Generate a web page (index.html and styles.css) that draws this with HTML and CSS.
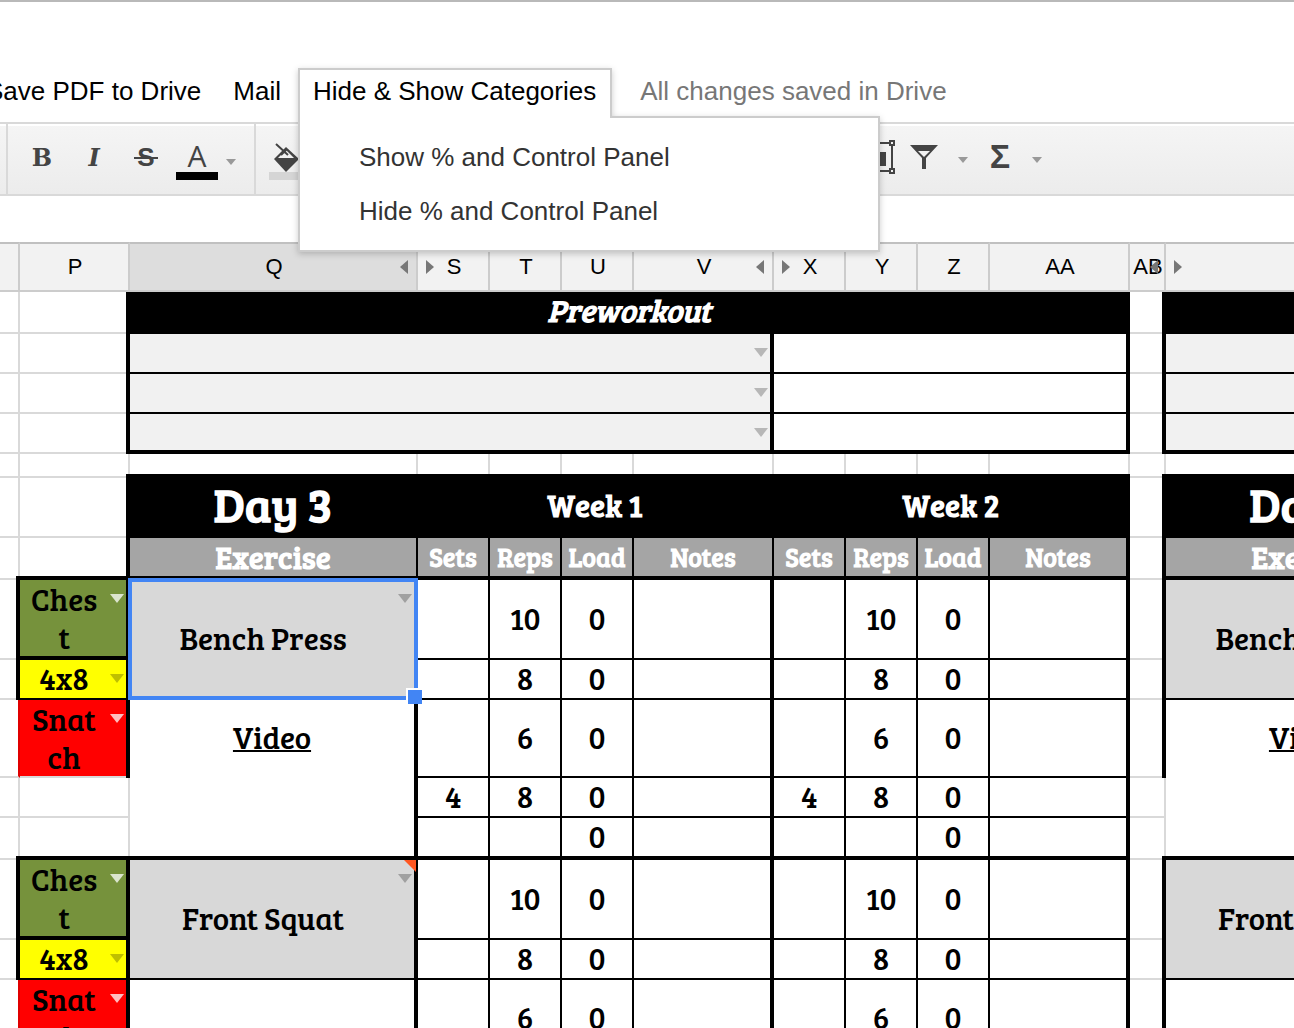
FILE: index.html
```html
<!DOCTYPE html>
<html lang="en">
<head>
    <meta charset="UTF-8">
    <meta name="viewport" content="width=device-width, initial-scale=1.0">
    <title>Training Program</title>
    <link rel="stylesheet" href="styles.css">
</head>
<body>
    <header>
        <nav class="menubar">
            <button class="menu-item">Save PDF to Drive</button>
            <button class="menu-item">Mail</button>
            <div class="menu-open">
                <button class="menu-tab">Hide &amp; Show Categories</button>
                <div class="menu-list">
                    <button>Show % and Control Panel</button>
                    <button>Hide % and Control Panel</button>
                </div>
            </div>
            <span class="status">All changes saved in Drive</span>
        </nav>
        <div class="toolbar">
            <div class="group">
                <button class="tool bold" title="Bold">B</button>
                <button class="tool italic" title="Italic">I</button>
                <button class="tool strike" title="Strikethrough">S</button>
                <button class="tool color" title="Text color">A</button>
                <button class="more" title="More colors"></button>
            </div>
            <div class="group fill">
                <button class="tool" title="Fill color">
                    <svg width="42" height="42" viewBox="0 0 42 42">
                        <rect x="0" y="34" width="42" height="8" fill="#d5d5d5"/>
                        <path d="M5 21 L17 9 L30 21 L17 34 Z" fill="#444"/>
                        <path d="M9 20 L17 12 L25 20 Z" fill="#f1f1f1"/>
                        <path d="M7 6 L19 17 M12 17 L18 11" stroke="#444" stroke-width="2" fill="none"/>
                    </svg>
                </button>
            </div>
            <div class="group data">
                <button class="tool" title="Insert chart">
                    <svg width="36" height="36" viewBox="0 0 36 36">
                        <path d="M4 4 H32 V32 H4 Z" fill="none" stroke="#444" stroke-width="2"/>
                        <path d="M10 18 h5 v9 h-5 Z M20 13 h6 v14 h-6 Z" fill="#444"/>
                        <g fill="#f1f1f1" stroke="#444" stroke-width="2">
                            <rect x="2" y="2" width="4" height="4"/>
                            <rect x="30" y="2" width="4" height="4"/>
                            <rect x="2" y="30" width="4" height="4"/>
                            <rect x="30" y="30" width="4" height="4"/>
                        </g>
                    </svg>
                </button>
                <button class="tool" title="Filter">
                    <svg width="28" height="26" viewBox="0 0 28 26">
                        <path d="M0 1 H28 L16 14 V25 H12 V14 Z" fill="#444"/>
                        <path d="M8 7 H20 L14 13 Z" fill="#f1f1f1"/>
                    </svg>
                </button>
                <button class="more" title="Filter views"></button>
                <button class="tool sum" title="Functions">&Sigma;</button>
                <button class="more" title="More functions"></button>
            </div>
        </div>
        <div class="formula"></div>
    </header>
    <main>
        <table>
            <colgroup>
                <col class="c20"><col class="c110"><col class="c288">
                <col class="c72"><col class="c72"><col class="c72"><col class="c140">
                <col class="c72"><col class="c72"><col class="c72"><col class="c140">
                <col class="c36"><col class="c288">
            </colgroup>
            <thead>
                <tr>
                    <th></th>
                    <th>P</th>
                    <th class="active">Q<i class="prev"></i></th>
                    <th>S<i class="next"></i></th>
                    <th>T</th>
                    <th>U</th>
                    <th>V<i class="prev"></i></th>
                    <th>X<i class="next"></i></th>
                    <th>Y</th>
                    <th>Z</th>
                    <th>AA</th>
                    <th class="narrow">AB<i class="prev"></i></th>
                    <th><i class="next"></i></th>
                </tr>
            </thead>
            <tbody>
                <!-- preworkout -->
                <tr class="h42">
                    <td></td><td class="edge"></td>
                    <td class="black pre" colspan="9">Preworkout</td>
                    <td class="edge"></td><td class="black"></td>
                </tr>
                <tr class="h40">
                    <td></td><td class="edge"></td>
                    <td class="k edge light" colspan="5"><button class="drop"></button></td>
                    <td class="k edge" colspan="4"></td>
                    <td class="edge"></td><td class="k light"></td>
                </tr>
                <tr class="h40">
                    <td></td><td class="edge"></td>
                    <td class="k edge light" colspan="5"><button class="drop"></button></td>
                    <td class="k edge" colspan="4"></td>
                    <td class="edge"></td><td class="k light"></td>
                </tr>
                <tr class="h40">
                    <td></td><td class="edge"></td>
                    <td class="k edge base light" colspan="5"><button class="drop"></button></td>
                    <td class="k edge base" colspan="4"></td>
                    <td class="edge"></td><td class="k base light"></td>
                </tr>
                <tr class="h24">
                    <td></td><td></td>
                    <td class="base"></td><td class="base"></td><td class="base"></td><td class="base"></td><td class="base"></td>
                    <td class="base"></td><td class="base"></td><td class="base"></td><td class="base"></td>
                    <td></td><td class="base"></td>
                </tr>
                <!-- day heading -->
                <tr class="h60">
                    <td></td><td class="edge corner"></td>
                    <td class="black day">Day 3</td>
                    <td class="black week" colspan="4">Week 1</td>
                    <td class="black week" colspan="4">Week 2</td>
                    <td class="edge corner"></td>
                    <td class="black day">Day 4</td>
                </tr>
                <tr class="h42 labels">
                    <td></td><td class="edge base"></td>
                    <td class="k base gray exercise">Exercise</td>
                    <td class="k base gray">Sets</td>
                    <td class="k base gray">Reps</td>
                    <td class="k base gray">Load</td>
                    <td class="k base gray">Notes</td>
                    <td class="k base gray">Sets</td>
                    <td class="k base gray">Reps</td>
                    <td class="k base gray">Load</td>
                    <td class="k base gray edge">Notes</td>
                    <td class="edge"></td>
                    <td class="k base gray exercise">Exercise</td>
                </tr>
                <!-- bench press -->
                <tr class="h80">
                    <td class="edge corner"></td>
                    <td class="k edge base green list">Ches<br>t<button class="drop pale"></button></td>
                    <td class="k edge name list" rowspan="2">Bench Press<button class="drop"></button><span class="selection"></span></td>
                    <td class="k"></td><td class="k">10</td><td class="k">0</td><td class="k edge"></td>
                    <td class="k"></td><td class="k">10</td><td class="k">0</td><td class="k edge"></td>
                    <td class="edge"></td>
                    <td class="k edge name list" rowspan="2">Bench Press<button class="drop"></button></td>
                </tr>
                <tr class="h40">
                    <td class="edge"></td>
                    <td class="k edge yellow list">4x8<button class="drop olive"></button></td>
                    <td class="k"></td><td class="k">8</td><td class="k">0</td><td class="k edge"></td>
                    <td class="k"></td><td class="k">8</td><td class="k">0</td><td class="k edge"></td>
                    <td class="edge"></td>
                </tr>
                <tr class="h78">
                    <td class="by-red"></td>
                    <td class="edge red list">Snat<br>ch<button class="drop pale"></button></td>
                    <td class="edge open"><a href="#video">Video</a></td>
                    <td class="k"></td><td class="k">6</td><td class="k">0</td><td class="k edge"></td>
                    <td class="k"></td><td class="k">6</td><td class="k">0</td><td class="k edge"></td>
                    <td class="edge"></td>
                    <td class="edge open"><a href="#video">Video</a></td>
                </tr>
                <tr class="h40">
                    <td></td><td></td><td class="edge open"></td>
                    <td class="k">4</td><td class="k">8</td><td class="k">0</td><td class="k edge"></td>
                    <td class="k">4</td><td class="k">8</td><td class="k">0</td><td class="k edge"></td>
                    <td></td><td class="edge open"></td>
                </tr>
                <tr class="h42">
                    <td></td><td class="base"></td><td class="k edge base"></td>
                    <td class="k base"></td><td class="k base"></td><td class="k base">0</td><td class="k edge base"></td>
                    <td class="k base"></td><td class="k base"></td><td class="k base">0</td><td class="k edge base"></td>
                    <td></td><td class="k edge base"></td>
                </tr>
                <!-- front squat -->
                <tr class="h80">
                    <td class="edge corner"></td>
                    <td class="k edge corner base green list">Ches<br>t<button class="drop pale"></button></td>
                    <td class="k edge name list" rowspan="2">Front Squat<button class="drop"></button><span class="note"></span></td>
                    <td class="k"></td><td class="k">10</td><td class="k">0</td><td class="k edge"></td>
                    <td class="k"></td><td class="k">10</td><td class="k">0</td><td class="k edge"></td>
                    <td class="edge corner"></td>
                    <td class="k edge name list" rowspan="2">Front Squat<button class="drop"></button></td>
                </tr>
                <tr class="h40">
                    <td class="edge"></td>
                    <td class="k edge yellow list">4x8<button class="drop olive"></button></td>
                    <td class="k"></td><td class="k">8</td><td class="k">0</td><td class="k edge"></td>
                    <td class="k"></td><td class="k">8</td><td class="k">0</td><td class="k edge"></td>
                    <td class="edge"></td>
                </tr>
                <tr class="h78">
                    <td class="by-red"></td>
                    <td class="edge red list">Snat<br>ch<button class="drop pale"></button></td>
                    <td class="edge open"></td>
                    <td class="k"></td><td class="k">6</td><td class="k">0</td><td class="k edge"></td>
                    <td class="k"></td><td class="k">6</td><td class="k">0</td><td class="k edge"></td>
                    <td class="edge"></td>
                    <td class="edge open"></td>
                </tr>
            </tbody>
        </table>
    </main>
</body>
</html>
```

FILE: styles.css
```css
* {
    box-sizing: border-box;
}
body {
    margin: 0;
    height: 100vh;
    display: flex;
    flex-direction: column;
    overflow: hidden;
    background: #fff;
    border-top: 2px solid #b9b9b9;
    font-family: "Liberation Sans", Arial, sans-serif;
}
button {
    margin: 0;
    padding: 0;
    border: 0;
    background: none;
    color: inherit;
    font: inherit;
}

/* menu bar */
.menubar {
    display: flex;
    height: 120px;
    padding-top: 66px;
    margin-left: -30px;
    font-size: 26px;
    line-height: 46px;
    white-space: nowrap;
}
.menu-item {
    height: 46px;
    padding: 0 16px;
}
.menu-open {
    position: relative;
    z-index: 10;
    height: 50px;
    margin-left: 1px;
    filter: drop-shadow(0 2px 3px rgba(0, 0, 0, 0.2));
}
.menu-tab {
    position: relative;
    z-index: 2;
    height: 50px;
    padding: 0 14px 6px 13px;
    background: #fff;
    border: 2px solid #ccc;
    border-bottom: 0;
    line-height: 42px;
}
.menu-list {
    position: absolute;
    z-index: 1;
    top: 48px;
    left: 0;
    width: 582px;
    padding: 12px 0;
    display: flex;
    flex-direction: column;
    background: #fff;
    border: 2px solid #ccc;
    color: #333;
}
.menu-list button {
    height: 54px;
    padding: 0 59px;
    text-align: left;
}
.status {
    margin-left: 28px;
    color: #777;
}

/* toolbar */
.toolbar {
    display: flex;
    height: 74px;
    border-top: 2px solid #d9d9d9;
    border-bottom: 2px solid #d9d9d9;
    background: linear-gradient(#f5f5f5, #ececec);
    box-shadow: inset 0 2px #fff;
    color: #444;
}
.group {
    display: flex;
    align-items: center;
    padding: 0 14px 0 8px;
    margin-left: 6px;
    border-left: 2px solid #d9d9d9;
}
.group.fill {
    margin-left: 0;
}
.group.data {
    margin-left: 517px;
    padding-bottom: 4px;
    border-left: 0;
}
.tool {
    position: relative;
    width: 52px;
    height: 52px;
    display: flex;
    align-items: center;
    justify-content: center;
    font-size: 24px;
}
.bold,
.italic,
.strike {
    padding-bottom: 4px;
    font-family: "DejaVu Serif", serif;
    font-weight: bold;
}
.italic {
    font-style: italic;
}
.strike {
    font-family: "Liberation Sans", Arial, sans-serif;
    font-size: 26px;
}
.strike::after {
    content: "";
    position: absolute;
    top: 24px;
    left: 14px;
    width: 24px;
    height: 2px;
    background: #444;
}
.color {
    width: 42px;
    height: 42px;
    margin: 0 4px;
    border-bottom: 8px solid #000;
    font-family: "Open Sans", sans-serif;
    font-size: 30px;
}
.data .tool {
    width: 46px;
}
.data .sum {
    width: 42px;
    padding-bottom: 2px;
    font-weight: bold;
    font-size: 34px;
}
.more {
    width: 18px;
    height: 24px;
    display: flex;
    align-items: center;
    justify-content: center;
}
.data .more {
    width: 32px;
}
.more::after {
    content: "";
    margin-top: 6px;
    border: 5px solid transparent;
    border-top: 6px solid #999;
    border-bottom: 0;
}
.formula {
    height: 46px;
}

/* sheet */
main {
    flex: 1;
    min-height: 0;
    overflow: hidden;
}
table {
    width: 1454px;
    table-layout: fixed;
    border-collapse: separate;
    border-spacing: 0;
    font-family: "Bree Serif", "DejaVu Serif", serif;
    font-size: 31px;
    line-height: 36px;
}
.c20 { width: 20px; }
.c36 { width: 36px; }
.c72 { width: 72px; }
.c110 { width: 110px; }
.c140 { width: 140px; }
.c288 { width: 288px; }
.h24 { height: 24px; }
.h40 { height: 40px; }
.h42 { height: 42px; }
.h60 { height: 60px; }
.h78 { height: 78px; }
.h80 { height: 80px; }
th {
    position: relative;
    height: 50px;
    padding: 0 0 0 2px;
    border-top: 2px solid #c0c0c0;
    border-right: 2px solid #ccc;
    border-bottom: 2px solid #ccc;
    background: #f2f2f2;
    font: 22px "Liberation Sans", Arial, sans-serif;
}
th.active {
    background: #ddd;
}
.prev,
.next {
    position: absolute;
    top: 16px;
    border: 7px solid transparent;
}
.prev {
    right: 8px;
    border-left: 0;
    border-right: 8px solid #777;
}
.next {
    left: 8px;
    border-right: 0;
    border-left: 8px solid #777;
}
.narrow .prev {
    right: 6px;
}
td {
    position: relative;
    padding: 0 0 2px;
    border-right: 2px solid #d9d9d9;
    border-bottom: 2px solid #d9d9d9;
    text-align: center;
    white-space: nowrap;
}
.k {
    border-color: #000;
}
.edge {
    border-right: 4px solid #000;
}
.base {
    border-bottom: 4px solid #000;
}
/* square ends where a thick line crosses a thin one */
.edge::after {
    content: "";
    position: absolute;
    top: 0;
    right: -4px;
    bottom: -2px;
    width: 4px;
    background: #000;
}
.base::before {
    content: "";
    position: absolute;
    left: 0;
    right: -2px;
    bottom: -4px;
    height: 4px;
    background: #000;
}
.corner::after {
    top: -4px;
}
.open {
    padding-bottom: 4px;
    border-bottom: 0;
}
.black {
    padding-bottom: 4px;
    background: #000;
    border-color: #000;
    color: #fff;
    font-weight: bold;
}
.pre {
    font-style: italic;
}
.day {
    padding-bottom: 8px;
    font-size: 47px;
}
.labels {
    color: #fff;
    font-weight: bold;
    font-size: 26px;
}
.labels td {
    padding-bottom: 0;
}
.exercise {
    font-size: 31px;
}
.gray { background: #a5a5a5; }
.light { background: #f1f1f1; }
.name { background: #d8d8d8; }
.green { background: #76923c; }
.yellow { background: #ff0; }
.red { background: #f00; }
.by-red {
    border-right-color: #e00000;
}
.list {
    padding-right: 18px;
}
.green,
.red {
    padding-bottom: 0;
    line-height: 38px;
}
td a {
    color: #000;
    text-decoration-thickness: 2px;
}

/* validation arrow, selection frame and note corner lie over the cells */
.drop {
    position: absolute;
    top: 14px;
    right: 2px;
    border: 7px solid transparent;
    border-top: 9px solid #a0a0a0;
    border-bottom: 0;
}
.light .drop { border-top-color: #b7b7b7; }
.pale { border-top-color: rgba(255, 255, 255, 0.75); }
.olive { border-top-color: #bfbf00; }
.selection {
    position: absolute;
    z-index: 3;
    top: -2px;
    right: -4px;
    bottom: -2px;
    left: -2px;
    border: 4px solid #4285f4;
}
.selection::after {
    content: "";
    position: absolute;
    right: -8px;
    bottom: -8px;
    width: 14px;
    height: 14px;
    background: #4285f4;
    border-top: 2px solid #fff;
    border-left: 2px solid #fff;
}
.note {
    position: absolute;
    z-index: 1;
    top: 0;
    right: -2px;
    border-top: 12px solid #ff5722;
    border-left: 12px solid transparent;
}
```
